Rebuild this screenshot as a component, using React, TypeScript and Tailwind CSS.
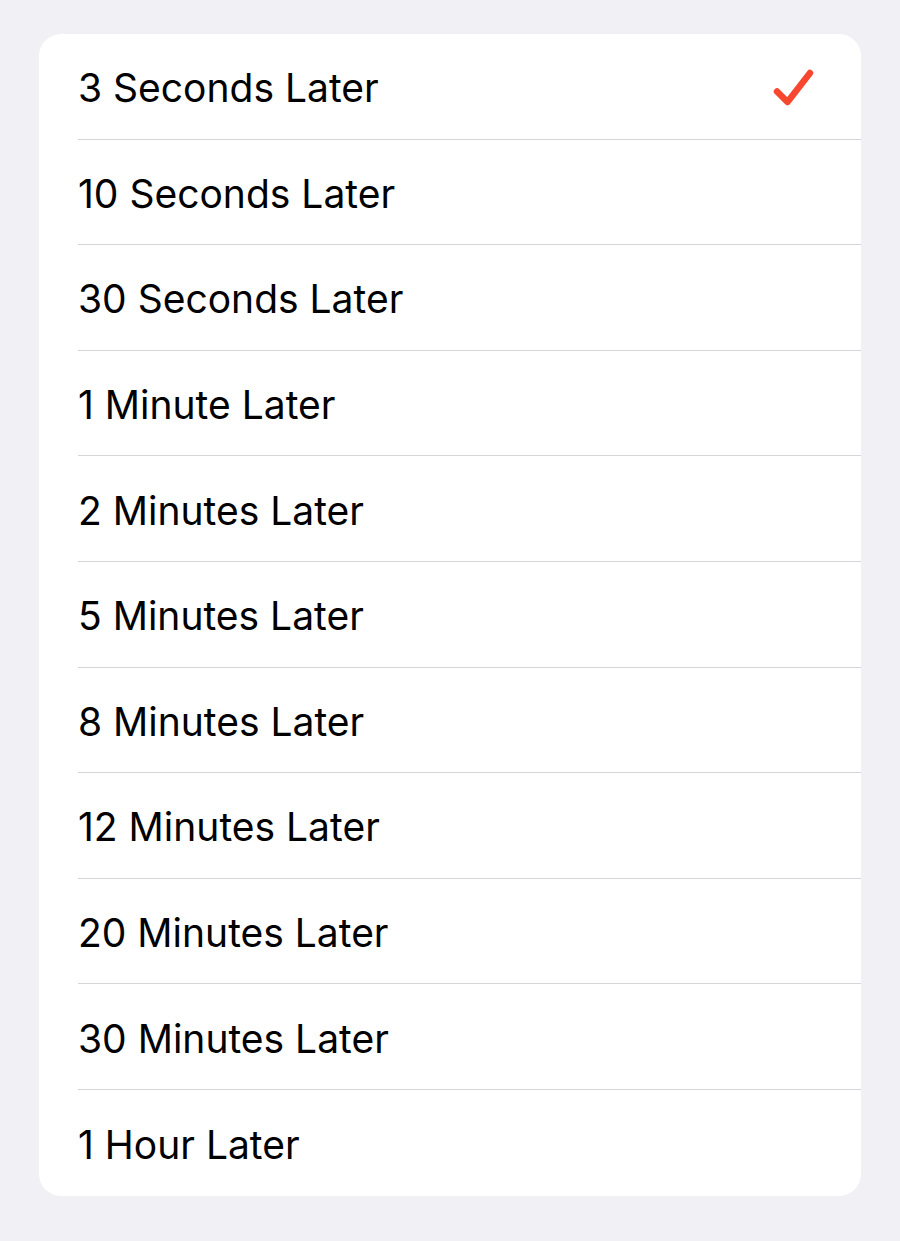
const options = [
  "3 Seconds Later",
  "10 Seconds Later",
  "30 Seconds Later",
  "1 Minute Later",
  "2 Minutes Later",
  "5 Minutes Later",
  "8 Minutes Later",
  "12 Minutes Later",
  "20 Minutes Later",
  "30 Minutes Later",
  "1 Hour Later",
];

function Check() {
  return (
    <svg width="42" height="38" viewBox="0 0 42 38" fill="none" className="mt-[3px]">
      <path
        d="M4 22.5 L14.5 33 L37 4"
        stroke="#f7472f"
        strokeWidth="6.5"
        strokeLinecap="round"
        strokeLinejoin="round"
      />
    </svg>
  );
}

export default function App() {
  const selected = 0;
  return (
    <div
      className="min-h-[1241px] w-[900px] bg-[#f0f0f5] px-[39px] pt-[34px]"
      style={{ fontFamily: "Inter, 'Noto Sans', sans-serif" }}
    >
      <div className="overflow-hidden rounded-[22px] bg-white pl-[39px]">
        {options.map((label, i) => (
          <div
            key={label}
            className={`flex h-[105.6px] items-center justify-between pr-[46px] ${
              i < options.length - 1 ? "border-b border-[#d6d6da]" : ""
            }`}
          >
            <span className="pt-[3px] text-[39px] leading-none text-black">{label}</span>
            {i === selected && <Check />}
          </div>
        ))}
      </div>
    </div>
  );
}
